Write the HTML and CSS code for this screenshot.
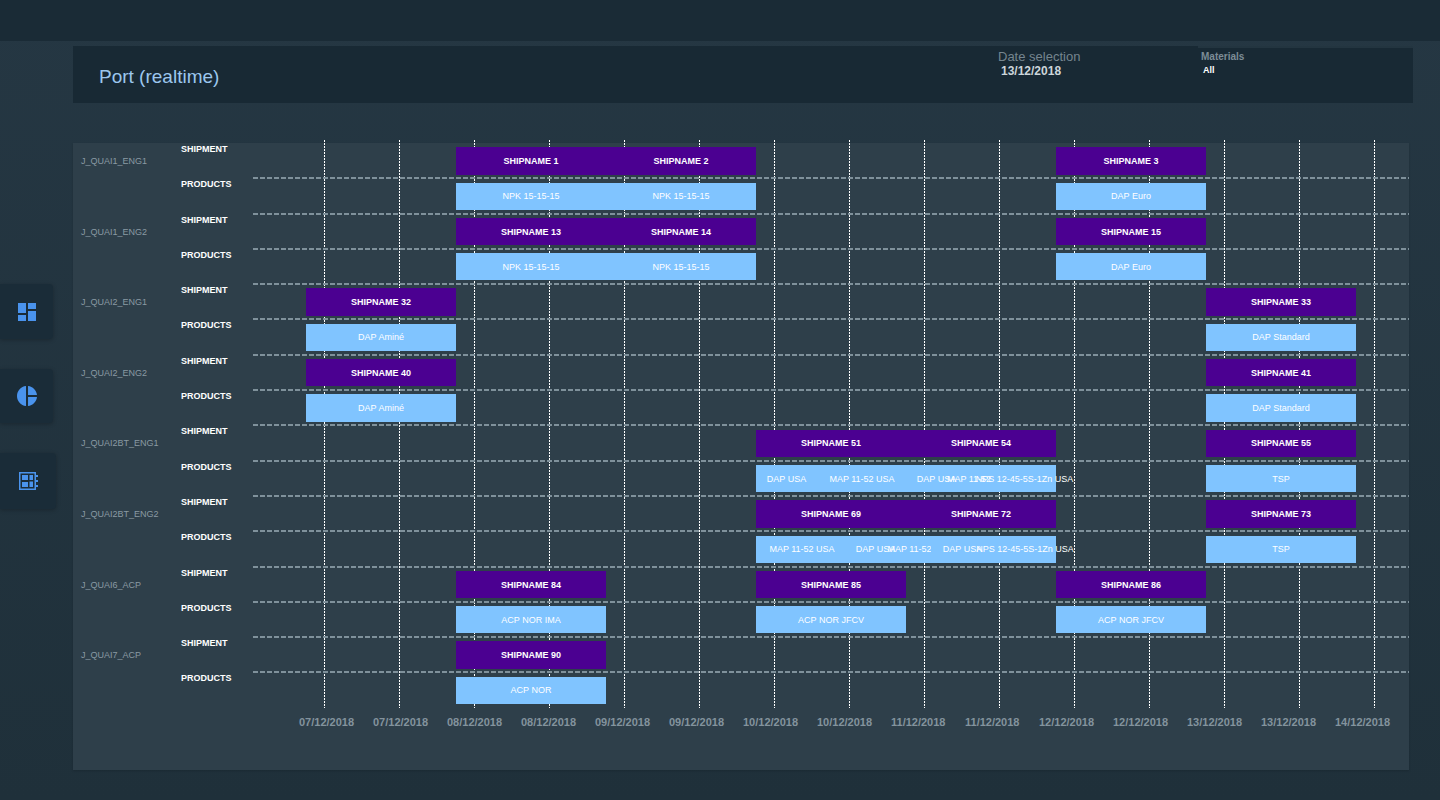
FILE: index.html
```html
<!DOCTYPE html>
<html>
<head>
  <title>Port (realtime)</title>
  <link rel="stylesheet" href="styles.css">
</head>
<body>
  <div class="topbar"></div>
  <div class="layout">
    <nav class="sidebar">
      <a class="nav-btn nav-btn-a">
        <svg width="20" height="20" viewBox="2 2 20 20"><path d="M3 13h8V3H3v10zm0 8h8v-6H3v6zm10 0h8V11h-8v10zm0-18v6h8V3h-8z"/></svg>
      </a>
      <a class="nav-btn nav-btn-b">
        <svg width="20" height="20" viewBox="2 2 20 20"><path d="M11 2v20c-5.07-.5-9-4.79-9-10s3.93-9.5 9-10zm2.03 0v8.99H22c-.47-4.74-4.24-8.52-8.97-8.99zm0 11.01V22c4.74-.47 8.5-4.25 8.97-8.99h-8.97z"/></svg>
      </a>
      <a class="nav-btn nav-btn-c">
        <svg width="21" height="20" viewBox="0 0 21 20"><path fill-rule="evenodd" d="M1 1h17v18H1zM2.5 2.500v15h14v-15z"/><path d="M4 4h6v5H4zM4 11h6v5H4zM11.500 4h3.500v5h-3.500zM11.500 10.500h3.500v5.500h-3.500zM18 4h2v2h-2zM18 9h2v2h-2zM18 14h2v2h-2z"/></svg>
      </a>
    </nav>
    <main class="content">
      <header class="panel-head">
        <h1 class="page-title">Port (realtime)</h1>
        <div class="filter filter-date">
          <div class="filter-label">Date selection</div>
          <div class="filter-value">13/12/2018</div>
        </div>
        <div class="filter filter-materials">
          <div class="filter-label">Materials</div>
          <div class="filter-value">All</div>
        </div>
      </header>

      <section class="chart">
        <div class="gridlines">
          <span></span><span></span><span></span><span></span><span></span>
          <span></span><span></span><span></span><span></span><span></span>
          <span></span><span></span><span></span><span></span><span></span>
        </div>

        <div class="group">
          <div class="group-name">J_QUAI1_ENG1</div>
          <div class="group-rows">
            <div class="row">
              <div class="row-label">SHIPMENT</div>
              <div class="track">
                <div class="bar ship" style="left:203px;width:150px">SHIPNAME 1</div>
                <div class="bar ship" style="left:353px;width:150px">SHIPNAME 2</div>
                <div class="bar ship" style="left:803px;width:150px">SHIPNAME 3</div>
              </div>
            </div>
            <div class="row">
              <div class="row-label">PRODUCTS</div>
              <div class="track">
                <div class="bar prod" style="left:203px;width:150px">NPK 15-15-15</div>
                <div class="bar prod" style="left:353px;width:150px">NPK 15-15-15</div>
                <div class="bar prod" style="left:803px;width:150px">DAP Euro</div>
              </div>
            </div>
          </div>
        </div>

        <div class="group">
          <div class="group-name">J_QUAI1_ENG2</div>
          <div class="group-rows">
            <div class="row">
              <div class="row-label">SHIPMENT</div>
              <div class="track">
                <div class="bar ship" style="left:203px;width:150px">SHIPNAME 13</div>
                <div class="bar ship" style="left:353px;width:150px">SHIPNAME 14</div>
                <div class="bar ship" style="left:803px;width:150px">SHIPNAME 15</div>
              </div>
            </div>
            <div class="row">
              <div class="row-label">PRODUCTS</div>
              <div class="track">
                <div class="bar prod" style="left:203px;width:150px">NPK 15-15-15</div>
                <div class="bar prod" style="left:353px;width:150px">NPK 15-15-15</div>
                <div class="bar prod" style="left:803px;width:150px">DAP Euro</div>
              </div>
            </div>
          </div>
        </div>

        <div class="group">
          <div class="group-name">J_QUAI2_ENG1</div>
          <div class="group-rows">
            <div class="row">
              <div class="row-label">SHIPMENT</div>
              <div class="track">
                <div class="bar ship" style="left:53px;width:150px">SHIPNAME 32</div>
                <div class="bar ship" style="left:953px;width:150px">SHIPNAME 33</div>
              </div>
            </div>
            <div class="row">
              <div class="row-label">PRODUCTS</div>
              <div class="track">
                <div class="bar prod" style="left:53px;width:150px">DAP Aminé</div>
                <div class="bar prod" style="left:953px;width:150px">DAP Standard</div>
              </div>
            </div>
          </div>
        </div>

        <div class="group">
          <div class="group-name">J_QUAI2_ENG2</div>
          <div class="group-rows">
            <div class="row">
              <div class="row-label">SHIPMENT</div>
              <div class="track">
                <div class="bar ship" style="left:53px;width:150px">SHIPNAME 40</div>
                <div class="bar ship" style="left:953px;width:150px">SHIPNAME 41</div>
              </div>
            </div>
            <div class="row">
              <div class="row-label">PRODUCTS</div>
              <div class="track">
                <div class="bar prod" style="left:53px;width:150px">DAP Aminé</div>
                <div class="bar prod" style="left:953px;width:150px">DAP Standard</div>
              </div>
            </div>
          </div>
        </div>

        <div class="group">
          <div class="group-name">J_QUAI2BT_ENG1</div>
          <div class="group-rows">
            <div class="row">
              <div class="row-label">SHIPMENT</div>
              <div class="track">
                <div class="bar ship" style="left:503px;width:150px">SHIPNAME 51</div>
                <div class="bar ship" style="left:653px;width:150px">SHIPNAME 54</div>
                <div class="bar ship" style="left:953px;width:150px">SHIPNAME 55</div>
              </div>
            </div>
            <div class="row">
              <div class="row-label">PRODUCTS</div>
              <div class="track">
                <div class="bar prod" style="left:503px;width:61px">DAP USA</div>
                <div class="bar prod" style="left:564px;width:90px">MAP 11-52 USA</div>
                <div class="bar prod" style="left:654px;width:59px">DAP USA</div>
                <div class="bar prod" style="left:713px;width:27px">MAP 11-52 USA</div>
                <div class="bar prod" style="left:740px;width:63px">NPS 12-45-5S-1Zn USA</div>
                <div class="bar prod" style="left:953px;width:150px">TSP</div>
              </div>
            </div>
          </div>
        </div>

        <div class="group">
          <div class="group-name">J_QUAI2BT_ENG2</div>
          <div class="group-rows">
            <div class="row">
              <div class="row-label">SHIPMENT</div>
              <div class="track">
                <div class="bar ship" style="left:503px;width:150px">SHIPNAME 69</div>
                <div class="bar ship" style="left:653px;width:150px">SHIPNAME 72</div>
                <div class="bar ship" style="left:953px;width:150px">SHIPNAME 73</div>
              </div>
            </div>
            <div class="row">
              <div class="row-label">PRODUCTS</div>
              <div class="track">
                <div class="bar prod" style="left:503px;width:92px">MAP 11-52 USA</div>
                <div class="bar prod" style="left:595px;width:55px">DAP USA</div>
                <div class="bar prod" style="left:650px;width:34px">MAP 11-52 USA</div>
                <div class="bar prod" style="left:678px;width:63px">DAP USA</div>
                <div class="bar prod" style="left:741px;width:62px">NPS 12-45-5S-1Zn USA</div>
                <div class="bar prod" style="left:953px;width:150px">TSP</div>
              </div>
            </div>
          </div>
        </div>

        <div class="group">
          <div class="group-name">J_QUAI6_ACP</div>
          <div class="group-rows">
            <div class="row">
              <div class="row-label">SHIPMENT</div>
              <div class="track">
                <div class="bar ship" style="left:203px;width:150px">SHIPNAME 84</div>
                <div class="bar ship" style="left:503px;width:150px">SHIPNAME 85</div>
                <div class="bar ship" style="left:803px;width:150px">SHIPNAME 86</div>
              </div>
            </div>
            <div class="row">
              <div class="row-label">PRODUCTS</div>
              <div class="track">
                <div class="bar prod" style="left:203px;width:150px">ACP NOR IMA</div>
                <div class="bar prod" style="left:503px;width:150px">ACP NOR JFCV</div>
                <div class="bar prod" style="left:803px;width:150px">ACP NOR JFCV</div>
              </div>
            </div>
          </div>
        </div>

        <div class="group">
          <div class="group-name">J_QUAI7_ACP</div>
          <div class="group-rows">
            <div class="row">
              <div class="row-label">SHIPMENT</div>
              <div class="track">
                <div class="bar ship" style="left:203px;width:150px">SHIPNAME 90</div>
              </div>
            </div>
            <div class="row">
              <div class="row-label">PRODUCTS</div>
              <div class="track">
                <div class="bar prod" style="left:203px;width:150px">ACP NOR</div>
              </div>
            </div>
          </div>
        </div>

        <div class="axis">
          <span>07/12/2018</span><span>07/12/2018</span><span>08/12/2018</span>
          <span>08/12/2018</span><span>09/12/2018</span><span>09/12/2018</span>
          <span>10/12/2018</span><span>10/12/2018</span><span>11/12/2018</span>
          <span>11/12/2018</span><span>12/12/2018</span><span>12/12/2018</span>
          <span>13/12/2018</span><span>13/12/2018</span><span>14/12/2018</span>
        </div>
      </section>
    </main>
  </div>
</body>
</html>
```

FILE: styles.css
```css
* {
  box-sizing: border-box;
}
body {
  font-family: 'Liberation Sans', Arial, sans-serif;
  margin: 0;
  height: 800px;
  overflow: hidden;
  background: linear-gradient(180deg, #253743, #1f303a);
  color: #fff;
}
.topbar {
  height: 41px;
  background: #1a2b36;
}
.layout {
  display: flex;
}

/* left nav */
.sidebar {
  width: 73px;
  padding-top: 243px;
  display: flex;
  flex-direction: column;
  gap: 30px;
}
.nav-btn {
  display: flex;
  align-items: center;
  width: 53px;
  height: 55px;
  padding-left: 17px;
  background: #1a2c38;
  border-radius: 0 4px 4px 0;
  box-shadow: 0 1px 4px rgba(0, 0, 0, 0.25);
}
.nav-btn svg {
  fill: #4a93ec;
}
.nav-btn-b {
  height: 54px;
}
.nav-btn-c {
  width: 56px;
  height: 56px;
  padding-left: 18px;
}

/* header panel */
.content {
  padding-top: 5px;
}
.panel-head {
  display: flex;
  width: 1340px;
  height: 57px;
  background: #182934;
}
.page-title {
  width: 925px;
  margin: 0;
  padding: 19px 0 0 26px;
  font-size: 19px;
  font-weight: normal;
  line-height: 24px;
  color: #9cc7ee;
}
.filter-date {
  width: 200px;
  padding-top: 3px;
}
.filter-date .filter-label {
  font-size: 13px;
  line-height: 15px;
  color: #75858f;
}
.filter-date .filter-value {
  padding-left: 3px;
  font-size: 12px;
  font-weight: bold;
  line-height: 14px;
  color: #ccd5da;
}
.filter-materials {
  flex: 1;
  padding: 2px 0 0 3px;
  border-top: 2px solid #233540;
}
.filter-materials .filter-label {
  font-size: 10px;
  font-weight: bold;
  line-height: 14px;
  color: #7c8c96;
}
.filter-materials .filter-value {
  padding-left: 2px;
  font-size: 9px;
  font-weight: bold;
  line-height: 13px;
}

/* gantt */
.chart {
  position: relative;
  width: 1336px;
  height: 627px;
  margin-top: 40px;
  background: #2e3f4a;
  box-shadow: 0 1px 2px rgba(0, 0, 0, 0.15);
}
.gridlines {
  position: absolute;
  left: 251px;
  top: -3px;
  height: 568px;
  display: flex;
}
.gridlines span {
  width: 1px;
  margin-right: 74.02px;
  background: linear-gradient(#fff 2px, transparent 2px) 0 0 / 1px 3px repeat-y;
}
.group {
  position: relative;
  display: flex;
}
.group-name {
  width: 108px;
  padding: 12px 0 0 8px;
  font-size: 9px;
  line-height: 12px;
  color: #8a9aa3;
}
.group-rows {
  flex: 1;
}
.row {
  display: flex;
  height: 35.3px;
}
.row-label {
  width: 72px;
  font-size: 9px;
  font-weight: bold;
  line-height: 13px;
}
.track {
  position: relative;
  flex: 1;
}
.track::after {
  content: "";
  position: absolute;
  left: 0;
  right: 0;
  bottom: -1px;
  height: 2px;
  background: repeating-linear-gradient(90deg, #7f919b 0 5px, transparent 5px 7px);
}
.group:nth-last-child(2) .row:last-child .track::after {
  display: none;
}
.bar {
  position: absolute;
  top: 4.3px;
  height: 27.3px;
  display: flex;
  align-items: center;
  justify-content: center;
  font-size: 9px;
  white-space: nowrap;
}
.ship {
  background: #4b0091;
  font-weight: bold;
}
.prod {
  background: #80c4ff;
}
.axis {
  display: flex;
  padding: 8px 0 0 226px;
}
.axis span {
  width: 75px;
  font-size: 11px;
  font-weight: bold;
  line-height: 13px;
  color: #83939d;
}
```
